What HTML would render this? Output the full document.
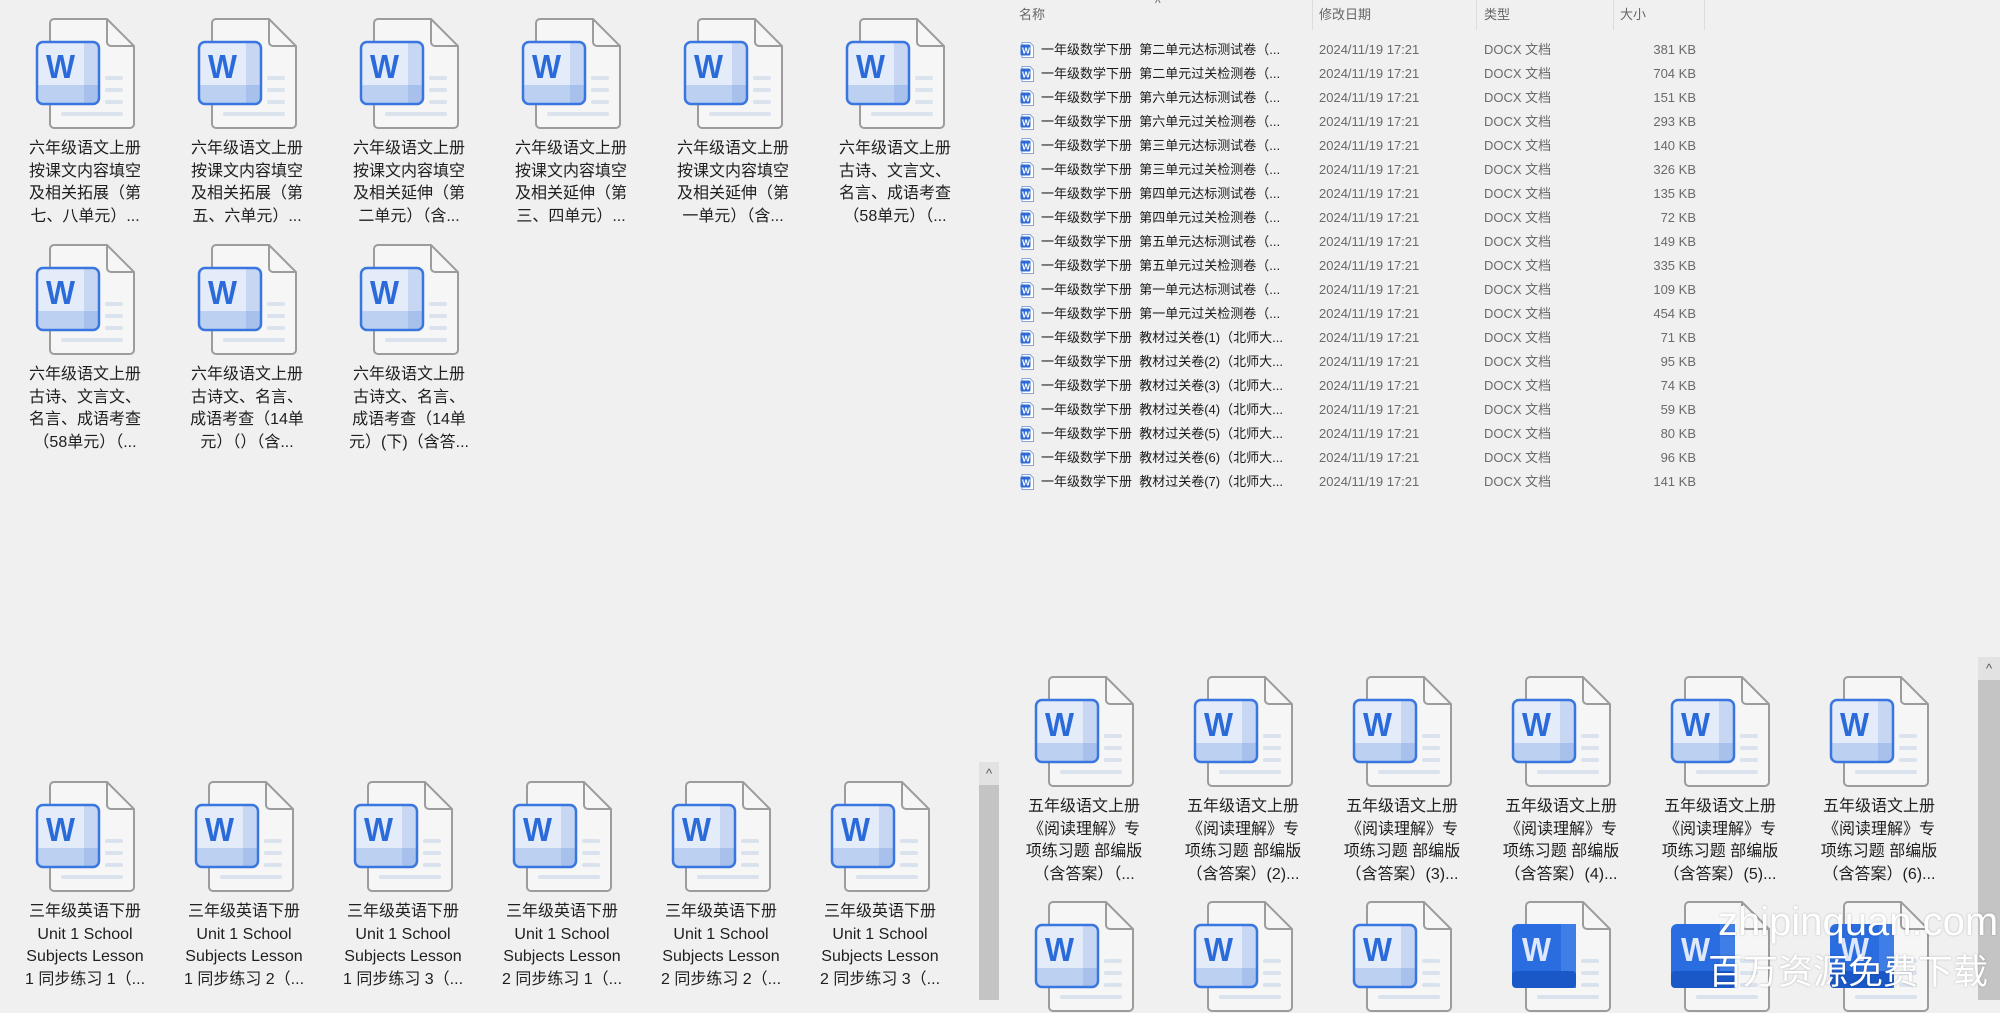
<!DOCTYPE html>
<html><head><meta charset="utf-8">
<style>
*{margin:0;padding:0;box-sizing:border-box}
body{width:2000px;height:1000px;background:#f0f0f0;position:relative;overflow:hidden;font-family:"Liberation Sans","Noto Sans CJK SC",sans-serif;color:#1a1a1a}
.it{position:absolute;width:100px;height:112px}
.it svg{position:absolute;left:0;top:0;width:100px;height:112px}
.lb{position:absolute;left:-18px;width:136px;top:120px;text-align:center;font-size:16px;line-height:22.5px;white-space:nowrap;color:#1e1e1e}
.hd{position:absolute;top:0;height:30px;font-size:13px;color:#666;line-height:30px}
.sep{position:absolute;top:0;width:1px;height:30px;background:#dcdcdc}
.row{position:absolute;left:1020px;height:24px;width:700px;font-size:13px;line-height:24px}
.row svg{position:absolute;left:0;top:4px;width:14px;height:16px}
.row .n{position:absolute;left:21px;color:#1a1a1a;white-space:nowrap}
.row .d{position:absolute;left:299px;color:#6a6a6a}
.row .t{position:absolute;left:464px;color:#6a6a6a}
.row .s{position:absolute;right:24px;color:#6a6a6a;text-align:right}
.sb{position:absolute;background:#c4c4c4}
.sba{position:absolute;background:#e2e2e2;color:#555;font-size:13px;text-align:center}
.wm{position:absolute;color:#fff;text-shadow:0 0 2px rgba(0,0,0,.25);white-space:nowrap}
</style></head><body>
<svg width="0" height="0" style="position:absolute">
<defs>
<symbol id="d" viewBox="0 0 100 112">
<path d="M19 1H72L99 28V106a4 4 0 0 1-4 4H19a4 4 0 0 1-4-4V5a4 4 0 0 1 4-4Z" fill="#f6f6f6" stroke="#9c9c9c" stroke-width="2"/>
<path d="M72 1V24a4 4 0 0 0 4 4H99" fill="none" stroke="#9c9c9c" stroke-width="2"/>
<rect x="70" y="58" width="18" height="4" rx="2" fill="#dae2ee"/>
<rect x="70" y="70" width="18" height="4" rx="2" fill="#dae2ee"/>
<rect x="70" y="82" width="18" height="4" rx="2" fill="#dae2ee"/>
<rect x="26" y="94" width="62" height="4" rx="2" fill="#dae2ee"/>
<rect x="2" y="24" width="62" height="62" rx="6" fill="#e4ecf9"/>
<rect x="49" y="25" width="14" height="60" fill="#c6d6f3"/>
<rect x="3" y="67" width="60" height="18" fill="#bcd0f1"/>
<rect x="49" y="67" width="14" height="18" fill="#a7c0ec"/>
<rect x="2" y="24" width="62" height="62" rx="6" fill="none" stroke="#3a76df" stroke-width="2.5"/>
<text x="11" y="60" font-family="Liberation Sans" font-weight="bold" font-size="33" fill="#2b6ad9" textLength="29" lengthAdjust="spacingAndGlyphs">W</text>
</symbol>
<symbol id="f" viewBox="0 0 100 112">
<path d="M19 1H72L99 28V106a4 4 0 0 1-4 4H19a4 4 0 0 1-4-4V5a4 4 0 0 1 4-4Z" fill="#f6f6f6" stroke="#9c9c9c" stroke-width="2"/>
<path d="M72 1V24a4 4 0 0 0 4 4H99" fill="none" stroke="#9c9c9c" stroke-width="2"/>
<rect x="70" y="58" width="18" height="4" rx="2" fill="#dae2ee"/>
<rect x="70" y="70" width="18" height="4" rx="2" fill="#dae2ee"/>
<rect x="70" y="82" width="18" height="4" rx="2" fill="#dae2ee"/>
<rect x="26" y="94" width="62" height="4" rx="2" fill="#dae2ee"/>
<rect x="1" y="23" width="64" height="64" rx="6" fill="#2a6de0"/>
<rect x="50" y="23" width="15" height="64" fill="#3f7ee6"/>
<rect x="1" y="70" width="64" height="17" rx="4" fill="#1a58c8"/>
<text x="11" y="60" font-family="Liberation Sans" font-weight="bold" font-size="33" fill="#dfe8fb" textLength="29" lengthAdjust="spacingAndGlyphs">W</text>
</symbol>
<symbol id="s" viewBox="0 0 14 16">
<path d="M2 .5H10L13.5 4V15.5H2Z" fill="#fff" stroke="#8aa6d8"/>
<rect x=".5" y="2.5" width="10" height="11" rx="1.5" fill="#2f6bd6"/>
<text x="2" y="11.5" font-family="Liberation Sans" font-weight="bold" font-size="8.5" fill="#fff">W</text>
</symbol>
</defs></svg>

<!-- Top-left grid -->
<div class="it" style="left:35px;top:18px"><svg><use href="#d"/></svg><div class="lb">六年级语文上册<br>按课文内容填空<br>及相关拓展（第<br>七、八单元）...</div></div>
<div class="it" style="left:197px;top:18px"><svg><use href="#d"/></svg><div class="lb">六年级语文上册<br>按课文内容填空<br>及相关拓展（第<br>五、六单元）...</div></div>
<div class="it" style="left:359px;top:18px"><svg><use href="#d"/></svg><div class="lb">六年级语文上册<br>按课文内容填空<br>及相关延伸（第<br>二单元）（含...</div></div>
<div class="it" style="left:521px;top:18px"><svg><use href="#d"/></svg><div class="lb">六年级语文上册<br>按课文内容填空<br>及相关延伸（第<br>三、四单元）...</div></div>
<div class="it" style="left:683px;top:18px"><svg><use href="#d"/></svg><div class="lb">六年级语文上册<br>按课文内容填空<br>及相关延伸（第<br>一单元）（含...</div></div>
<div class="it" style="left:845px;top:18px"><svg><use href="#d"/></svg><div class="lb">六年级语文上册<br>古诗、文言文、<br>名言、成语考查<br>（58单元）（...</div></div>
<div class="it" style="left:35px;top:244px"><svg><use href="#d"/></svg><div class="lb">六年级语文上册<br>古诗、文言文、<br>名言、成语考查<br>（58单元）（...</div></div>
<div class="it" style="left:197px;top:244px"><svg><use href="#d"/></svg><div class="lb">六年级语文上册<br>古诗文、名言、<br>成语考查（14单<br>元）（）（含...</div></div>
<div class="it" style="left:359px;top:244px"><svg><use href="#d"/></svg><div class="lb">六年级语文上册<br>古诗文、名言、<br>成语考查（14单<br>元）(下)（含答...</div></div>

<!-- Top-right list -->
<div class="hd" style="left:1019px">名称</div>
<div class="hd" style="left:1155px;top:-12px;font-size:12px">^</div>
<div class="hd" style="left:1319px">修改日期</div>
<div class="hd" style="left:1484px">类型</div>
<div class="hd" style="left:1620px">大小</div>
<div class="sep" style="left:1312px"></div><div class="sep" style="left:1476px"></div><div class="sep" style="left:1613px"></div><div class="sep" style="left:1704px"></div>

<div class="row" style="top:38px"><svg><use href="#s"/></svg><span class="n">一年级数学下册&nbsp; 第二单元达标测试卷（...</span><span class="d">2024/11/19 17:21</span><span class="t">DOCX 文档</span><span class="s">381 KB</span></div>
<div class="row" style="top:62px"><svg><use href="#s"/></svg><span class="n">一年级数学下册&nbsp; 第二单元过关检测卷（...</span><span class="d">2024/11/19 17:21</span><span class="t">DOCX 文档</span><span class="s">704 KB</span></div>
<div class="row" style="top:86px"><svg><use href="#s"/></svg><span class="n">一年级数学下册&nbsp; 第六单元达标测试卷（...</span><span class="d">2024/11/19 17:21</span><span class="t">DOCX 文档</span><span class="s">151 KB</span></div>
<div class="row" style="top:110px"><svg><use href="#s"/></svg><span class="n">一年级数学下册&nbsp; 第六单元过关检测卷（...</span><span class="d">2024/11/19 17:21</span><span class="t">DOCX 文档</span><span class="s">293 KB</span></div>
<div class="row" style="top:134px"><svg><use href="#s"/></svg><span class="n">一年级数学下册&nbsp; 第三单元达标测试卷（...</span><span class="d">2024/11/19 17:21</span><span class="t">DOCX 文档</span><span class="s">140 KB</span></div>
<div class="row" style="top:158px"><svg><use href="#s"/></svg><span class="n">一年级数学下册&nbsp; 第三单元过关检测卷（...</span><span class="d">2024/11/19 17:21</span><span class="t">DOCX 文档</span><span class="s">326 KB</span></div>
<div class="row" style="top:182px"><svg><use href="#s"/></svg><span class="n">一年级数学下册&nbsp; 第四单元达标测试卷（...</span><span class="d">2024/11/19 17:21</span><span class="t">DOCX 文档</span><span class="s">135 KB</span></div>
<div class="row" style="top:206px"><svg><use href="#s"/></svg><span class="n">一年级数学下册&nbsp; 第四单元过关检测卷（...</span><span class="d">2024/11/19 17:21</span><span class="t">DOCX 文档</span><span class="s">72 KB</span></div>
<div class="row" style="top:230px"><svg><use href="#s"/></svg><span class="n">一年级数学下册&nbsp; 第五单元达标测试卷（...</span><span class="d">2024/11/19 17:21</span><span class="t">DOCX 文档</span><span class="s">149 KB</span></div>
<div class="row" style="top:254px"><svg><use href="#s"/></svg><span class="n">一年级数学下册&nbsp; 第五单元过关检测卷（...</span><span class="d">2024/11/19 17:21</span><span class="t">DOCX 文档</span><span class="s">335 KB</span></div>
<div class="row" style="top:278px"><svg><use href="#s"/></svg><span class="n">一年级数学下册&nbsp; 第一单元达标测试卷（...</span><span class="d">2024/11/19 17:21</span><span class="t">DOCX 文档</span><span class="s">109 KB</span></div>
<div class="row" style="top:302px"><svg><use href="#s"/></svg><span class="n">一年级数学下册&nbsp; 第一单元过关检测卷（...</span><span class="d">2024/11/19 17:21</span><span class="t">DOCX 文档</span><span class="s">454 KB</span></div>
<div class="row" style="top:326px"><svg><use href="#s"/></svg><span class="n">一年级数学下册&nbsp; 教材过关卷(1)（北师大...</span><span class="d">2024/11/19 17:21</span><span class="t">DOCX 文档</span><span class="s">71 KB</span></div>
<div class="row" style="top:350px"><svg><use href="#s"/></svg><span class="n">一年级数学下册&nbsp; 教材过关卷(2)（北师大...</span><span class="d">2024/11/19 17:21</span><span class="t">DOCX 文档</span><span class="s">95 KB</span></div>
<div class="row" style="top:374px"><svg><use href="#s"/></svg><span class="n">一年级数学下册&nbsp; 教材过关卷(3)（北师大...</span><span class="d">2024/11/19 17:21</span><span class="t">DOCX 文档</span><span class="s">74 KB</span></div>
<div class="row" style="top:398px"><svg><use href="#s"/></svg><span class="n">一年级数学下册&nbsp; 教材过关卷(4)（北师大...</span><span class="d">2024/11/19 17:21</span><span class="t">DOCX 文档</span><span class="s">59 KB</span></div>
<div class="row" style="top:422px"><svg><use href="#s"/></svg><span class="n">一年级数学下册&nbsp; 教材过关卷(5)（北师大...</span><span class="d">2024/11/19 17:21</span><span class="t">DOCX 文档</span><span class="s">80 KB</span></div>
<div class="row" style="top:446px"><svg><use href="#s"/></svg><span class="n">一年级数学下册&nbsp; 教材过关卷(6)（北师大...</span><span class="d">2024/11/19 17:21</span><span class="t">DOCX 文档</span><span class="s">96 KB</span></div>
<div class="row" style="top:470px"><svg><use href="#s"/></svg><span class="n">一年级数学下册&nbsp; 教材过关卷(7)（北师大...</span><span class="d">2024/11/19 17:21</span><span class="t">DOCX 文档</span><span class="s">141 KB</span></div>

<!-- Bottom-left grid -->
<div class="it" style="left:35px;top:781px"><svg><use href="#d"/></svg><div class="lb">三年级英语下册<br>Unit 1 School<br>Subjects Lesson<br>1 同步练习 1（...</div></div>
<div class="it" style="left:194px;top:781px"><svg><use href="#d"/></svg><div class="lb">三年级英语下册<br>Unit 1 School<br>Subjects Lesson<br>1 同步练习 2（...</div></div>
<div class="it" style="left:353px;top:781px"><svg><use href="#d"/></svg><div class="lb">三年级英语下册<br>Unit 1 School<br>Subjects Lesson<br>1 同步练习 3（...</div></div>
<div class="it" style="left:512px;top:781px"><svg><use href="#d"/></svg><div class="lb">三年级英语下册<br>Unit 1 School<br>Subjects Lesson<br>2 同步练习 1（...</div></div>
<div class="it" style="left:671px;top:781px"><svg><use href="#d"/></svg><div class="lb">三年级英语下册<br>Unit 1 School<br>Subjects Lesson<br>2 同步练习 2（...</div></div>
<div class="it" style="left:830px;top:781px"><svg><use href="#d"/></svg><div class="lb">三年级英语下册<br>Unit 1 School<br>Subjects Lesson<br>2 同步练习 3（...</div></div>
<div class="sba" style="left:979px;top:762px;width:20px;height:23px;line-height:23px">^</div>
<div class="sb" style="left:979px;top:785px;width:20px;height:215px"></div>

<!-- Bottom-right grid -->
<div class="it" style="left:1034px;top:676px"><svg><use href="#d"/></svg><div class="lb">五年级语文上册<br>《阅读理解》专<br>项练习题 部编版<br>（含答案）（...</div></div>
<div class="it" style="left:1193px;top:676px"><svg><use href="#d"/></svg><div class="lb">五年级语文上册<br>《阅读理解》专<br>项练习题 部编版<br>（含答案）(2)...</div></div>
<div class="it" style="left:1352px;top:676px"><svg><use href="#d"/></svg><div class="lb">五年级语文上册<br>《阅读理解》专<br>项练习题 部编版<br>（含答案）(3)...</div></div>
<div class="it" style="left:1511px;top:676px"><svg><use href="#d"/></svg><div class="lb">五年级语文上册<br>《阅读理解》专<br>项练习题 部编版<br>（含答案）(4)...</div></div>
<div class="it" style="left:1670px;top:676px"><svg><use href="#d"/></svg><div class="lb">五年级语文上册<br>《阅读理解》专<br>项练习题 部编版<br>（含答案）(5)...</div></div>
<div class="it" style="left:1829px;top:676px"><svg><use href="#d"/></svg><div class="lb">五年级语文上册<br>《阅读理解》专<br>项练习题 部编版<br>（含答案）(6)...</div></div>
<div class="it" style="left:1034px;top:901px"><svg><use href="#d"/></svg></div>
<div class="it" style="left:1193px;top:901px"><svg><use href="#d"/></svg></div>
<div class="it" style="left:1352px;top:901px"><svg><use href="#d"/></svg></div>
<div class="it" style="left:1511px;top:901px"><svg><use href="#f"/></svg></div>
<div class="it" style="left:1670px;top:901px"><svg><use href="#f"/></svg></div>
<div class="it" style="left:1829px;top:901px"><svg><use href="#f"/></svg></div>
<div class="sba" style="left:1978px;top:657px;width:22px;height:23px;line-height:23px">^</div>
<div class="sb" style="left:1978px;top:680px;width:22px;height:320px"></div>

<div class="wm" style="left:1718px;top:897px;font-size:40px;line-height:50px">zhipinquan.com</div>
<div class="wm" style="left:1708px;top:952px;font-size:35px;line-height:42px">百万资源免费下载</div>
</body></html>
